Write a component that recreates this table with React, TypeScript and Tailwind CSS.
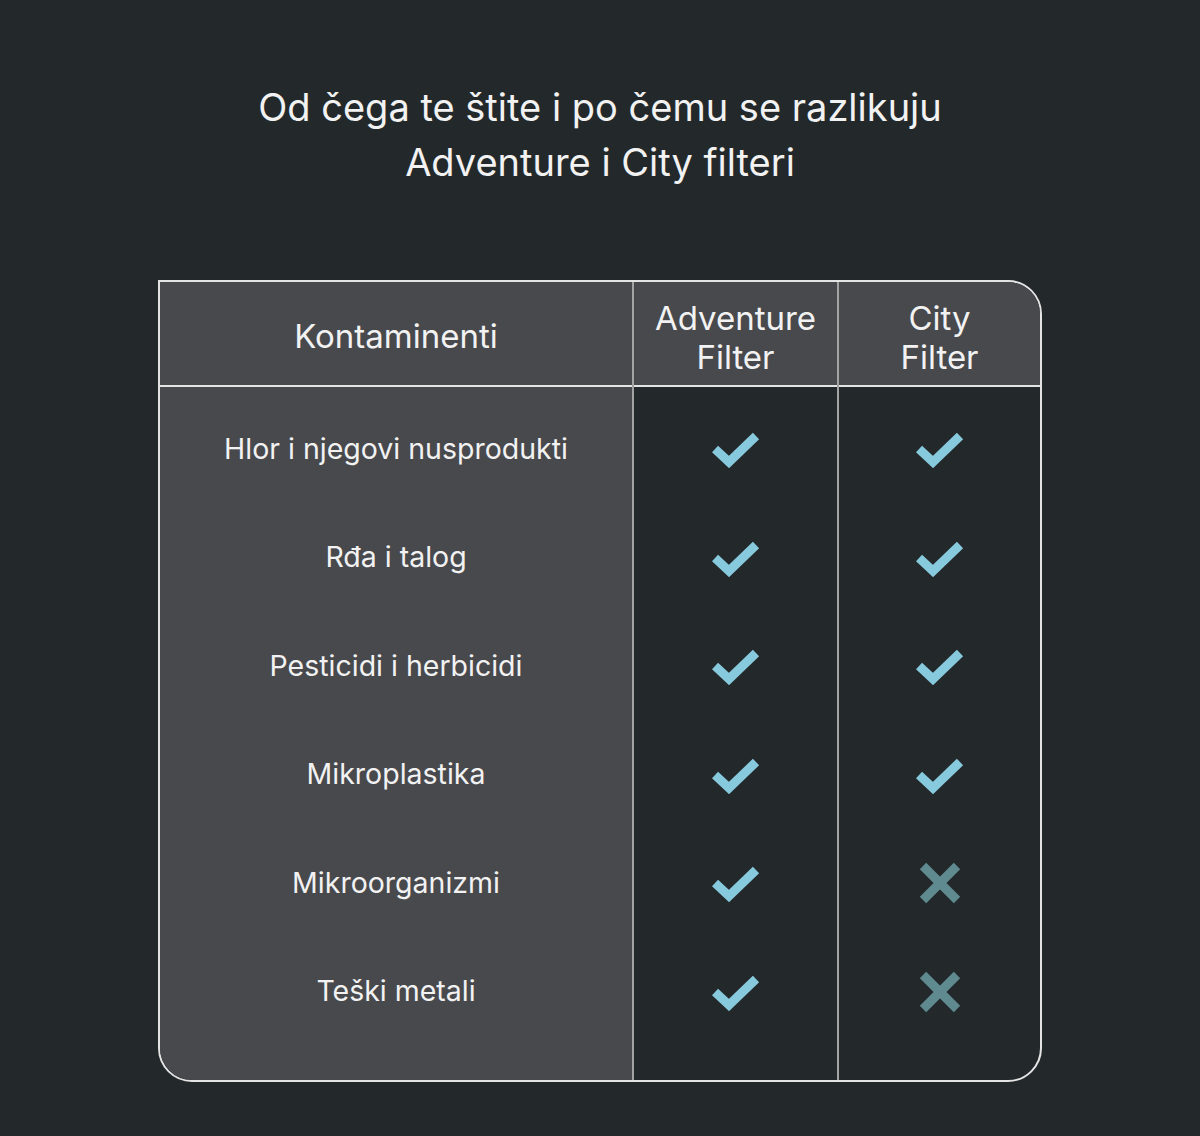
const rows = [
  { label: 'Hlor i njegovi nusprodukti', adventure: true, city: true },
  { label: 'Rđa i talog', adventure: true, city: true },
  { label: 'Pesticidi i herbicidi', adventure: true, city: true },
  { label: 'Mikroplastika', adventure: true, city: true },
  { label: 'Mikroorganizmi', adventure: true, city: false },
  { label: 'Teški metali', adventure: true, city: false },
];

function Check() {
  return (
    <svg width="48" height="38" viewBox="0 0 48 38">
      <path d="M3 19 L17 32 L44 6" fill="none" stroke="#88cadd" strokeWidth="9" strokeLinejoin="miter" />
    </svg>
  );
}

function Cross() {
  return (
    <svg width="44" height="42" viewBox="0 0 44 42">
      <path d="M5 4 L39 38 M39 4 L5 38" fill="none" stroke="#5f8a8f" strokeWidth="9" />
    </svg>
  );
}

function Mark({ ok }: { ok: boolean }) {
  return (
    <div className="h-[108.5px] flex items-center justify-center">
      {ok ? <Check /> : <Cross />}
    </div>
  );
}

export default function App() {
  return (
    <div
      className="w-[1200px] h-[1136px] bg-[#23292b] text-[#f2f2f2] flex flex-col items-center"
      style={{ fontFamily: 'Inter, "Noto Sans", sans-serif' }}
    >
      {/* Title */}
      <h1 className="mt-[80px] text-center text-[38px] leading-[55px] font-normal">
        Od čega te štite i po čemu se razlikuju
        <br />
        Adventure i City filteri
      </h1>

      {/* Table */}
      <div className="mt-[90px] w-[884px] h-[802px] flex border-2 border-[#e4e4e4] rounded-tr-[34px] rounded-b-[34px] overflow-hidden">
        <div className="w-[474px] flex flex-col bg-[#48494d] border-r-2 border-[#a3a3a3]">
          <div className="h-[105px] pt-[6px] flex items-center justify-center border-b-2 border-[#e4e4e4] text-[33px]">
            Kontaminenti
          </div>
          <div className="pt-[8px]">
            {rows.map((r) => (
              <div key={r.label} className="h-[108.5px] flex items-center justify-center text-[28.5px]">
                {r.label}
              </div>
            ))}
          </div>
        </div>
        <div className="w-[205px] flex flex-col border-r-2 border-[#a3a3a3]">
          <div className="h-[105px] pt-[8px] flex items-center justify-center text-center bg-[#48494d] border-b-2 border-[#e4e4e4] text-[33px] leading-[39px]">
            Adventure
            <br />
            Filter
          </div>
          <div className="pt-[8px]">
            {rows.map((r) => (
              <Mark key={r.label} ok={r.adventure} />
            ))}
          </div>
        </div>
        <div className="flex-1 flex flex-col">
          <div className="h-[105px] pt-[8px] flex items-center justify-center text-center bg-[#48494d] border-b-2 border-[#e4e4e4] text-[33px] leading-[39px]">
            City
            <br />
            Filter
          </div>
          <div className="pt-[8px]">
            {rows.map((r) => (
              <Mark key={r.label} ok={r.city} />
            ))}
          </div>
        </div>
      </div>
    </div>
  );
}
